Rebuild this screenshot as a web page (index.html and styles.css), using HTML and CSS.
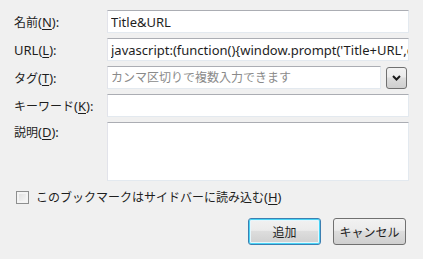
FILE: index.html
```html
<!DOCTYPE html>
<html lang="ja">
<head>
<meta charset="utf-8">
<link rel="stylesheet" href="styles.css">
</head>
<body>
<div class="dialog">
  <div class="form">
    <label class="lbl">名前<span class="en">(<u>N</u>):</span></label>
    <div class="field"><input class="tb en" type="text" value="Title&amp;URL"></div>

    <label class="lbl"><span class="en">URL(<u>L</u>):</span></label>
    <div class="field"><input class="tb en url" type="text" value="javascript:(function(){window.prompt('Title+URL',document.title+' '+location.href);})();"></div>

    <label class="lbl">タグ<span class="en">(<u>T</u>):</span></label>
    <div class="field tagrow">
      <input class="tb" type="text" placeholder="カンマ区切りで複数入力できます">
      <button class="drop" type="button">
        <svg width="9" height="6" viewBox="0 0 9 6"><path d="M1 1 L4.5 4.5 L8 1" fill="none" stroke="#1a1a1a" stroke-width="2"/></svg>
      </button>
    </div>

    <label class="lbl">キーワード<span class="en">(<u>K</u>):</span></label>
    <div class="field"><input class="tb" type="text"></div>

    <label class="lbl top">説明<span class="en">(<u>D</u>):</span></label>
    <div class="field"><textarea class="tb ta"></textarea></div>
  </div>

  <label class="check">
    <span class="box"></span>
    <span>このブックマークはサイドバーに読み込む<span class="en">(<u>H</u>)</span></span>
  </label>

  <div class="buttons">
    <button class="btn default" type="button">追加</button>
    <button class="btn" type="button">キャンセル</button>
  </div>
</div>
</body>
</html>
```

FILE: styles.css
```css
html, body {
  margin: 0;
  padding: 0;
  background: #f0f0f0;
}
body {
  width: 423px;
  height: 259px;
  overflow: hidden;
  font-family: "Noto Sans", "Noto Sans CJK JP", sans-serif;
  font-size: 12px;
  color: #1e1e1e;
}
.en {
  font-size: 13px;
}
.dialog {
  padding: 10px 14px 0 14px;
}
.form {
  display: grid;
  grid-template-columns: 93px 302px;
  row-gap: 5px;
}
.lbl {
  display: flex;
  align-items: center;
  height: 23px;
  white-space: nowrap;
}
.lbl.top {
  align-items: flex-start;
  padding-top: 1px;
}
u {
  text-decoration: underline;
  text-underline-offset: 2px;
}
.field {
  display: flex;
}
.tb {
  box-sizing: border-box;
  width: 100%;
  height: 23px;
  margin: 0;
  padding: 0 3px;
  background: #ffffff;
  border: 1px solid;
  border-color: #abadb3 #e3e9ef #e3e9ef #e2e3ea;
  border-radius: 0;
  font-family: "Noto Sans", "Noto Sans CJK JP", sans-serif;
  font-size: 12px;
  color: #1e1e1e;
  outline: none;
}
.tb.en {
  font-size: 13px;
}
.tb.url {
  padding-right: 0;
}
.tb::placeholder {
  color: #8a8a8a;
}
.ta {
  height: 59px;
  resize: none;
}
.tagrow {
  gap: 5px;
  align-items: center;
}
.tagrow .tb {
  width: 274px;
  flex: none;
}
.drop {
  box-sizing: border-box;
  width: 21px;
  height: 22px;
  margin: 0;
  padding: 0;
  display: flex;
  align-items: center;
  justify-content: center;
  border: 1px solid #707070;
  border-radius: 3px;
  background: linear-gradient(#f2f2f2 0%, #ebebeb 45%, #dddddd 50%, #cfcfcf 100%);
}
.check {
  display: flex;
  align-items: center;
  gap: 7px;
  margin: 9px 0 0 2px;
  height: 14px;
}
.box {
  box-sizing: border-box;
  width: 13px;
  height: 13px;
  border: 1px solid #8e8f8f;
  background: linear-gradient(135deg, #dcdcdc, #fbfbfb);
  box-shadow: inset 0 0 0 2px #f4f4f4;
}
.buttons {
  display: flex;
  justify-content: flex-end;
  gap: 12px;
  margin-top: 14px;
  padding-right: 3px;
}
.btn {
  box-sizing: border-box;
  width: 73px;
  height: 27px;
  margin: 0;
  padding: 0;
  border: 1px solid #707070;
  border-radius: 3px;
  background: linear-gradient(#f2f2f2 0%, #ebebeb 45%, #dddddd 50%, #cfcfcf 100%);
  font-family: "Noto Sans", "Noto Sans CJK JP", sans-serif;
  font-size: 12px;
  color: #1e1e1e;
}
.btn.default {
  border-color: #3c7fb1;
  box-shadow: inset 0 0 0 1px #48d4f6, inset 0 0 0 2px #e6f6fc;
}
```
